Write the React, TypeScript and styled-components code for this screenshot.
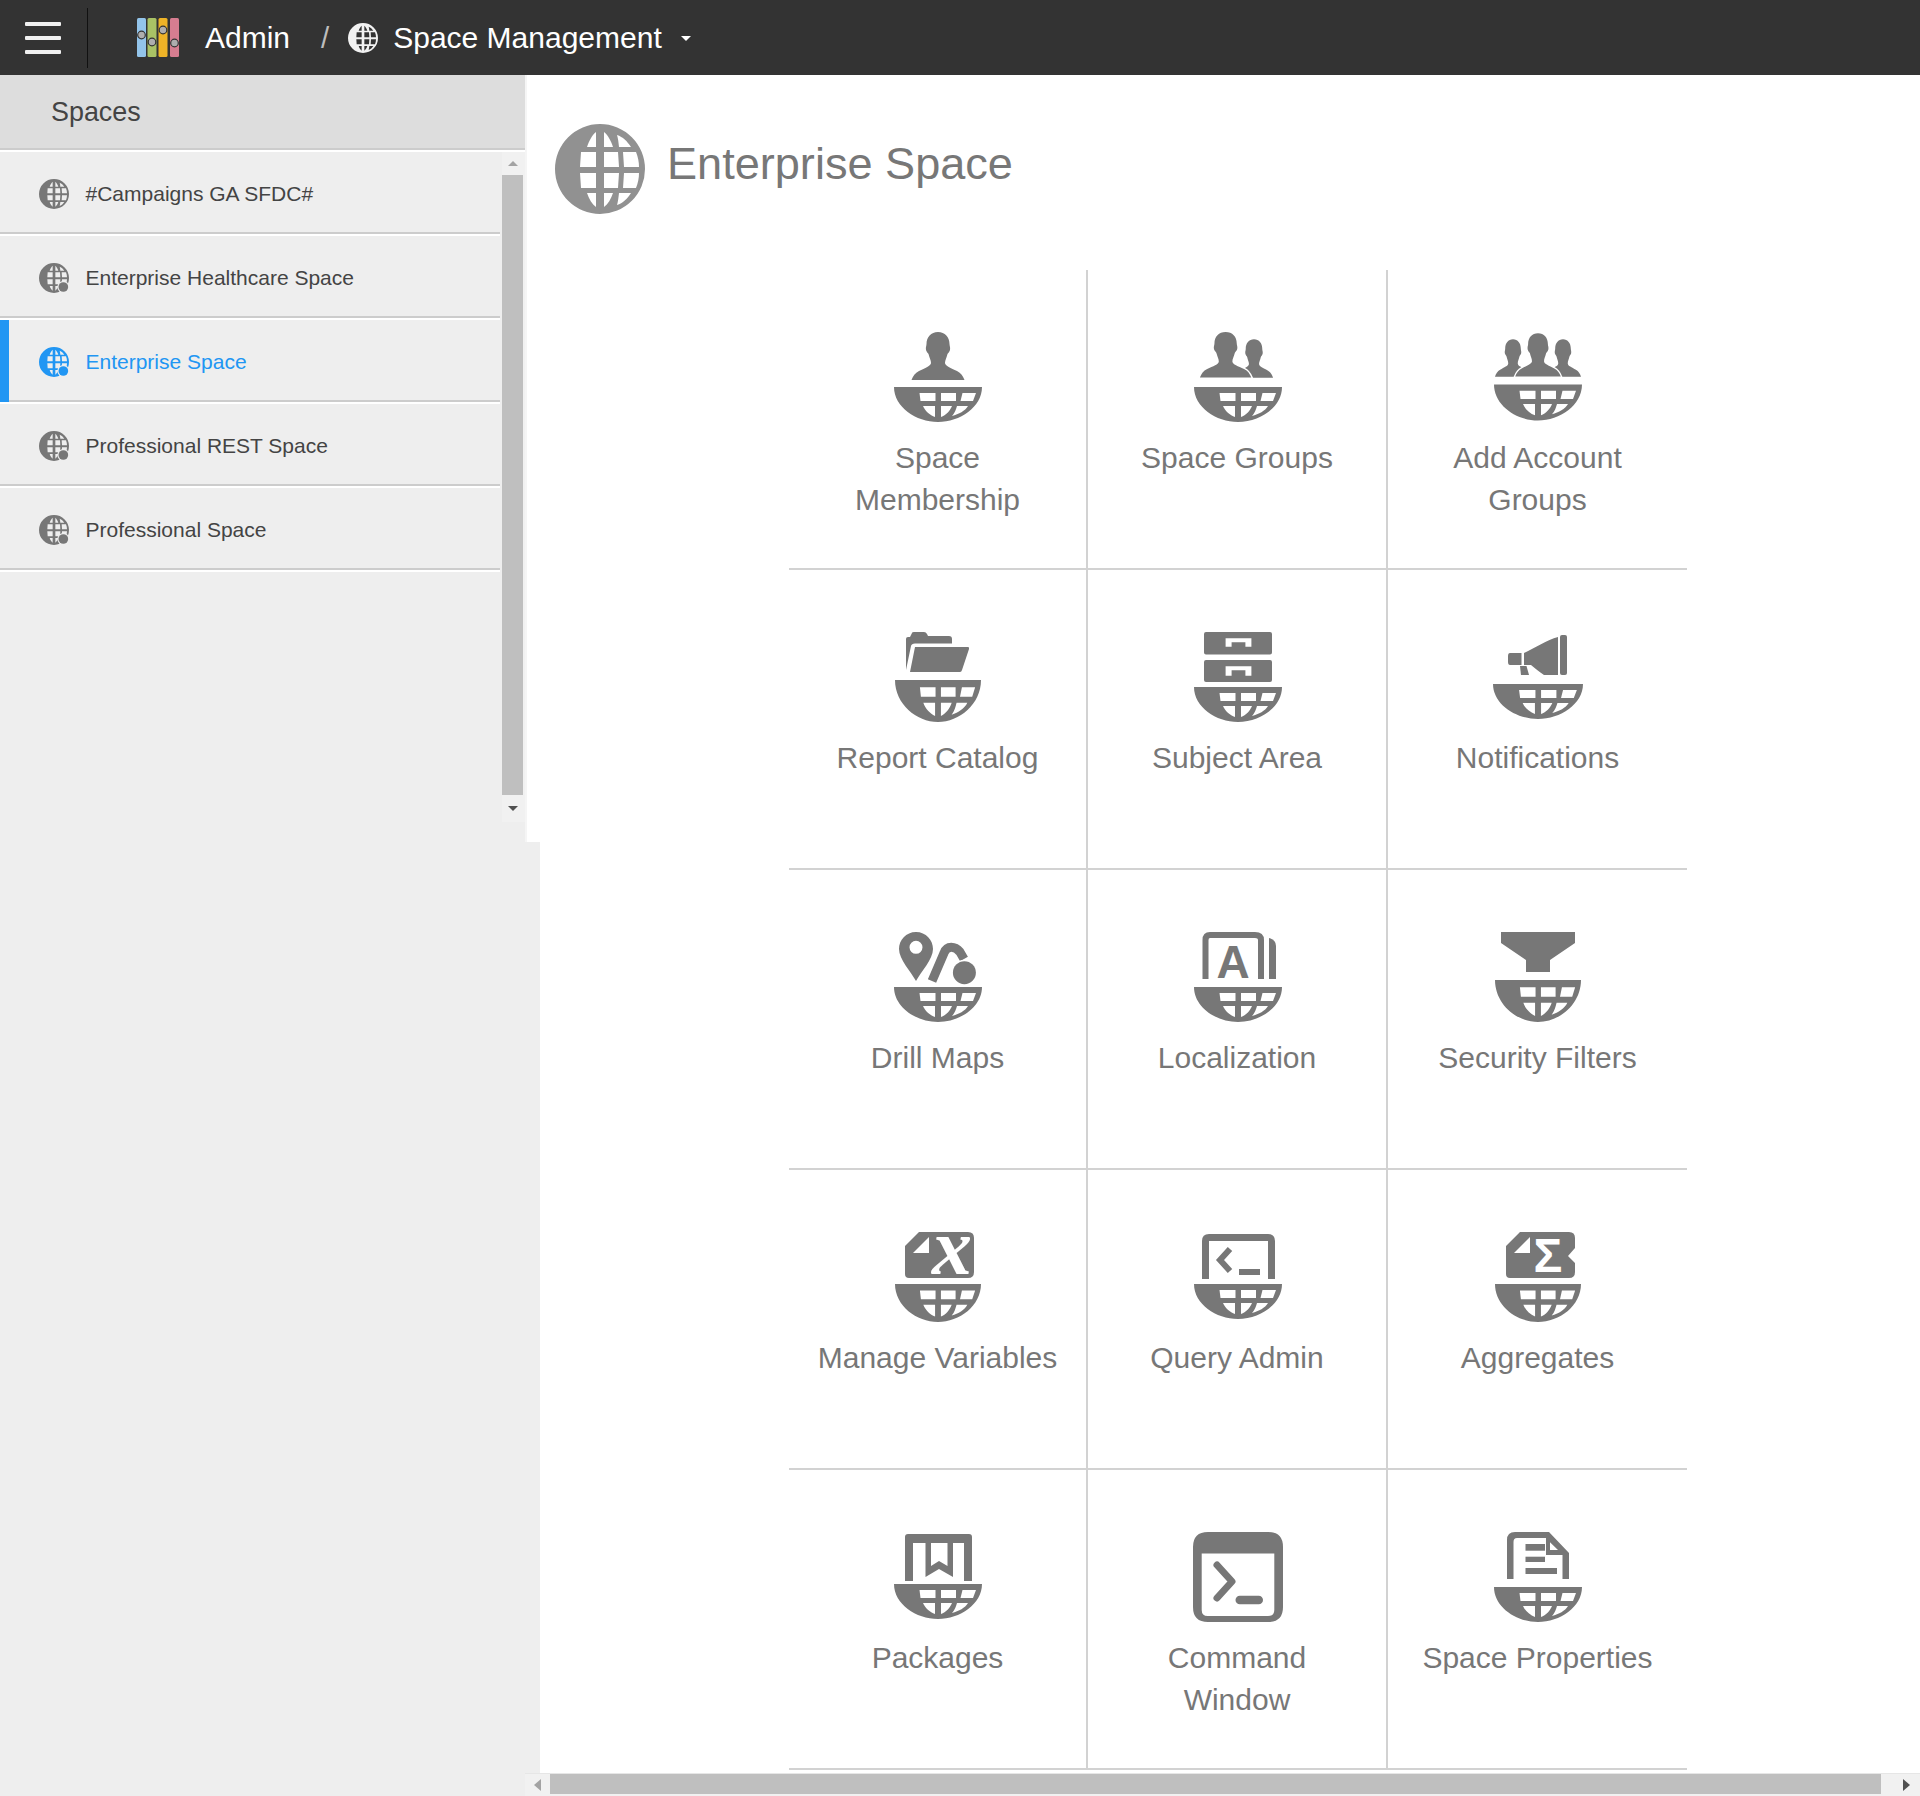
import React from "react";
import styled, { createGlobalStyle } from "styled-components";

const GlobalStyle = createGlobalStyle`
  html, body { margin: 0; padding: 0; background: #fff; }
  body { font-family: "Liberation Sans", Arial, sans-serif; }
`;

const Page = styled.div`
  position: relative;
  width: 1920px;
  height: 1796px;
  overflow: hidden;
  display: flex;
  flex-direction: column;
  background: #fff;
`;

const TopBar = styled.header`
  height: 75px;
  flex: none;
  background: #333;
  display: flex;
  align-items: center;
  color: #fff;
`;

const Burger = styled.div`
  margin-left: 25px;
  width: 36px;
  height: 32px;
  display: flex;
  flex-direction: column;
  justify-content: space-between;
`;

const BurgerBar = styled.span`
  display: block;
  height: 4px;
  border-radius: 1px;
  background: #f0f0f0;
`;

const BarDivider = styled.div`
  margin-left: 26px;
  width: 1px;
  height: 60px;
  background: #111;
`;

const LogoSvg = styled.svg`
  margin-left: 49px;
  width: 42px;
  height: 39px;
  flex: none;
`;

const Crumb = styled.span<{ $gap: number }>`
  margin-left: ${(p) => p.$gap}px;
  font-size: 30px;
  line-height: 34px;
  color: #fff;
`;

const CrumbSlash = styled.span`
  margin-left: 31px;
  font-size: 29.4px;
  line-height: 34px;
  color: #bdbdbd;
`;

const CrumbGlobe = styled.svg`
  margin-left: 19px;
  width: 30px;
  height: 30px;
  flex: none;
  color: #f2f2f2;
`;

const Caret = styled.span`
  margin-left: 19px;
  margin-top: 1px;
  width: 0;
  height: 0;
  border-left: 5.5px solid transparent;
  border-right: 5.5px solid transparent;
  border-top: 5px solid #fff;
`;

const Body = styled.div`
  flex: 1;
  display: flex;
  min-height: 0;
`;

const LeftColumn = styled.div`
  width: 540px;
  flex: none;
  background: #eee;
`;

const PanelBackdrop = styled.div`
  height: 767px;
  background: #fff;
`;

const Panel = styled.aside`
  width: 527px;
  height: 767px;
  box-sizing: border-box;
  background: #eee;
  border-right: 2px solid #f5f5f5;
  display: flex;
  flex-direction: column;
`;

const PanelHead = styled.div`
  flex: none;
  height: 71px;
  box-sizing: content-box;
  background: #ddd;
  border-bottom: 2px solid #ccc;
  margin-bottom: 2px;
  box-shadow: 0 2px 0 #fff;
  padding: 2px 0 0 51px;
  display: flex;
  align-items: center;
  font-size: 26.9px;
  color: #444;
`;

const ListArea = styled.div`
  height: 670px;
  flex: none;
  display: flex;
`;

const List = styled.ul`
  list-style: none;
  margin: 0;
  padding: 0;
  width: 500px;
  flex: none;
`;

const Item = styled.li<{ $active?: boolean }>`
  position: relative;
  height: 82px;
  box-sizing: border-box;
  margin-bottom: 2px;
  border-bottom: 2px solid #ccc;
  box-shadow: 0 2px 0 #fff;
  padding: 4px 0 0 39px;
  display: flex;
  align-items: center;
  gap: 16.5px;
  font-size: 21px;
  color: ${(p) => (p.$active ? "#2196f3" : "#444")};
  &::before {
    content: "";
    display: ${(p) => (p.$active ? "block" : "none")};
    position: absolute;
    left: 0;
    top: 0;
    bottom: -2px;
    width: 9px;
    background: #2196f3;
  }
`;

const ItemGlobe = styled.svg<{ $active?: boolean }>`
  width: 30px;
  height: 30px;
  flex: none;
  color: ${(p) => (p.$active ? "#2196f3" : "#777")};
`;

const VScroll = styled.div`
  margin-left: 2px;
  width: 23px;
  flex: none;
  background: #f1f1f1;
  display: flex;
  flex-direction: column;
`;

const VButton = styled.div<{ $height: number }>`
  height: ${(p) => p.$height}px;
  flex: none;
  display: flex;
  align-items: center;
  justify-content: center;
  padding-right: 2px;
`;

const VThumb = styled.div`
  flex: 1;
  width: 21px;
  background: #bfbfbf;
`;

const TriangleUp = styled.span`
  width: 0;
  height: 0;
  border-left: 5.5px solid transparent;
  border-right: 5.5px solid transparent;
  border-bottom: 5.5px solid #a3a3a3;
`;

const TriangleDown = styled.span`
  width: 0;
  height: 0;
  border-left: 5.5px solid transparent;
  border-right: 5.5px solid transparent;
  border-top: 5.5px solid #505050;
`;

const Main = styled.main`
  flex: 1;
  padding: 49px 0 0 15px;
  min-width: 0;
`;

const TitleRow = styled.div`
  display: flex;
  align-items: center;
  gap: 22px;
`;

const TitleGlobe = styled.svg`
  width: 90px;
  height: 90px;
  flex: none;
  color: #919191;
`;

const Title = styled.h1`
  margin: 0 0 11px;
  font-size: 45.1px;
  font-weight: 400;
  color: #777;
`;

const Grid = styled.div`
  margin: 56px 0 0 233px;
  display: grid;
  width: 900px;
  grid-template-columns: repeat(3, 300px);
  grid-auto-rows: 300px;
`;

const Cell = styled.div<{ $col: number; $first?: boolean }>`
  box-sizing: border-box;
  padding-top: ${(p) => (p.$first ? "61px" : "62px")};
  border-bottom: 2px solid #d2d2d2;
  border-right: ${(p) => (p.$col === 2 ? "0 none" : "2px solid #d2d2d2")};
  margin-left: ${(p) => (p.$col === 0 ? "1px" : "0")};
  width: ${(p) => (p.$col === 1 ? "300px" : "299px")};
  display: flex;
  flex-direction: column;
  align-items: center;
`;

const TileSvg = styled.svg<{ $shift: number }>`
  width: 90px;
  height: 90px;
  flex: none;
  margin-left: ${(p) => p.$shift}px;
  fill: #777;
  overflow: visible;
`;

const TileLabel = styled.div<{ $first?: boolean }>`
  margin-top: ${(p) => (p.$first ? "16px" : "15px")};
  width: 248px;
  text-align: center;
  font-size: 30px;
  line-height: 42px;
  color: #777;
`;

const HScroll = styled.div`
  position: absolute;
  left: 525px;
  right: 0;
  bottom: 0;
  height: 23px;
  box-sizing: border-box;
  background: #f1f1f1;
  border-top: 1px solid #e6e6e6;
  display: flex;
  align-items: stretch;
`;

const HButton = styled.div<{ $width: number; $end?: boolean }>`
  width: ${(p) => p.$width}px;
  box-sizing: border-box;
  padding-right: ${(p) => (p.$end ? "10px" : "0")};
  flex: none;
  display: flex;
  align-items: center;
  justify-content: ${(p) => (p.$end ? "flex-end" : "center")};
`;

const HThumb = styled.div`
  flex: 1;
  background: #bfbfbf;
  margin-bottom: 2px;
`;

const TriangleLeft = styled.span`
  width: 0;
  height: 0;
  border-top: 6px solid transparent;
  border-bottom: 6px solid transparent;
  border-right: 7px solid #a3a3a3;
`;

const TriangleRight = styled.span`
  width: 0;
  height: 0;
  border-top: 6px solid transparent;
  border-bottom: 6px solid transparent;
  border-left: 7px solid #505050;
`;

const GLOBE_D =
  "M-45 0A45 45 0 1 1 45 0A45 45 0 1 1 -45 0Z" +
  "M-4 -37C-8 -34 -11 -28 -13 -22H-4Z" +
  "M4 -37V-22H13C11 -28 8 -34 4 -37Z" +
  "M17 -34C23 -32 27 -28 31 -22H19C18.5 -27 18 -31 17 -34Z" +
  "M-19 -17H-4V-2H-20Z" +
  "M4 -17H18L19 -2H4Z" +
  "M23 -17H36C38 -12 39 -7 39 -2H24Z" +
  "M-20 4H-4V19H-19Z" +
  "M4 4H19L18 19H4Z" +
  "M24 4H39C39 9 38 14 36 19H23Z" +
  "M-13 24H-4V38C-8 35 -11 30 -13 24Z" +
  "M4 24H13C11 30 8 35 4 38Z" +
  "M19 24H31C27 30 23 34 17 36C18 33 18.5 28 19 24Z";

const GlobeShape = () => <path d={GLOBE_D} fill="currentColor" fillRule="evenodd" />;

const BASIN_D =
  "M-44 0H44C44 20 22 35 0 35C-22 35 -44 20 -44 0Z" +
  "M-18.5 6H-2.5V14H-17.5Z" +
  "M3 6H18V14H3Z" +
  "M24.5 6H38L35 14H22.5Z" +
  "M-15 19H-3V30C-8 28 -13 24 -15 19Z" +
  "M3 19H14C12 24 8 28 3 30Z" +
  "M19 19H30C27 24 21 27 14 29C17 26 18 22 19 19Z";

const Basin = ({ y, w = 88, h = 35 }: { y: number; w?: number; h?: number }) => (
  <path
    d={BASIN_D}
    fillRule="evenodd"
    transform={`translate(45 ${y}) scale(${w / 88} ${h / 35})`}
  />
);

const PERSON_D =
  "M0 0C7 0 11.5 5 11.5 12C11.5 14 12.5 15 12 18C11.5 20 10 21 9.5 22C8.5 26 7 28 7 31" +
  "C7 34 13 36 19 39C23 41 25 44 26.5 48H-26.5C-25 44 -23 41 -19 39C-13 36 -7 34 -7 31" +
  "C-7 28 -8.5 26 -9.5 22C-10 21 -11.5 20 -12 18C-12.5 15 -11.5 14 -11.5 12C-11.5 5 -7 0 0 0Z";

const Person = ({ x, y, sx, sy, halo }: { x: number; y: number; sx: number; sy: number; halo?: boolean }) => (
  <path
    d={PERSON_D}
    transform={`translate(${x} ${y}) scale(${sx} ${sy})`}
    stroke={halo ? "#fff" : "none"}
    strokeWidth={halo ? 3 : 0}
    paintOrder="stroke"
  />
);

const icons: Record<string, React.ReactNode> = {
  membership: (
    <>
      <Person x={45} y={1} sx={1} sy={1} />
      <Basin y={56} />
    </>
  ),
  groups: (
    <>
      <Person x={61} y={8.3} sx={0.72} sy={0.8} />
      <Person x={32.6} y={1} sx={0.97} sy={0.95} halo />
      <Basin y={56} />
    </>
  ),
  account: (
    <>
      <Person x={20} y={8.3} sx={0.68} sy={0.78} />
      <Person x={70} y={8.3} sx={0.68} sy={0.78} />
      <Person x={45} y={2.3} sx={0.86} sy={0.9} halo />
      <Basin y={53.5} h={36} />
    </>
  ),
  catalog: (
    <>
      <path d="M13 7Q13 5 15 5H17L19 1Q19 0 21 0H31Q33 0 34 2L35 4H56Q59 4 59 7V11.5H22Q18.5 11.5 18 14L13 38Z" />
      <path d="M22 15H75Q76.5 15 76 17L69 38Q68.5 40 67 40H17Z" />
      <Basin y={48} w={86} h={42} />
    </>
  ),
  subject: (
    <>
      <path
        fillRule="evenodd"
        d="M13 0H77Q79 0 79 2V20.5Q79 22.5 77 22.5H13Q11 22.5 11 20.5V2Q11 0 13 0Z
           M32.6 6.3V14.7H38.6V10.3H52.4V14.7H58.4V6.3Z
           M13 28H77Q79 28 79 30V48Q79 50 77 50H13Q11 50 11 48V30Q11 28 13 28Z
           M32.6 34.3V43.7H38.6V38.3H52.4V43.7H58.4V34.3Z"
      />
      <Basin y={55} />
    </>
  ),
  notify: (
    <>
      <path d="M17 21H28.5V33H17Q15 33 15 30V24Q15 21 17 21Z" />
      <path d="M31 21C42 16 54 8 65 5V43H51C46 40 42 36 38 33H31Z" />
      <path d="M27 34H33.5L36 43H28Z" />
      <rect x={67} y={3} width={7} height={40} rx={2} />
      <Basin y={52} w={90} />
    </>
  ),
  drill: (
    <>
      <path
        fillRule="evenodd"
        d="M23 0C13 0 6 8 6 17C6 27 18 40 23 49C28 40 40 27 40 17C40 8 33 0 23 0Z
           M23 8.8A6.5 6.5 0 1 1 23 21.8A6.5 6.5 0 1 1 23 8.8Z"
      />
      <path d="M39 49L51 21C54 13 62 14 67 20L71 27" fill="none" stroke="#777" strokeWidth={9} />
      <circle cx={71.4} cy={40.7} r={11.5} fill="#777" stroke="#fff" strokeWidth={3} paintOrder="stroke" />
      <Basin y={55} />
    </>
  ),
  locale: (
    <>
      <path d="M12.5 47V8Q12.5 3 17 3H62Q68 3 68 8V47" fill="none" stroke="#777" strokeWidth={6} />
      <path d="M76 6Q83 8 83 14V47H76Z" />
      <text x={40} y={46} textAnchor="middle" fontFamily="'Liberation Sans', Arial, sans-serif" fontWeight={700} fontSize={46} fill="#777">
        A
      </text>
      <Basin y={55} />
    </>
  ),
  security: (
    <>
      <path d="M8 0H82V11L57 28V40H33V28L8 11Z" />
      <Basin y={48} w={86} h={42} />
    </>
  ),
  variables: (
    <>
      <path d="M26 0H75Q81 0 81 6V40Q81 46 75 46H16Q12 46 12 42V14Z" />
      <path d="M36 5V21H20Z" fill="#fff" />
      <text
        x={59}
        y={42}
        textAnchor="middle"
        fontFamily="'Liberation Serif', 'Times New Roman', serif"
        fontStyle="italic"
        fontWeight={700}
        fontSize={80}
        fill="#fff"
      >
        x
      </text>
      <Basin y={52} w={86} h={38} />
    </>
  ),
  query: (
    <>
      <path d="M12.5 47V9Q12.5 5.5 16 5.5H75Q78.5 5.5 78.5 9V47" fill="none" stroke="#777" strokeWidth={7} />
      <path d="M37 17L27 28L37 39" fill="none" stroke="#777" strokeWidth={6} />
      <rect x={46} y={37} width={21} height={6} />
      <Basin y={52} />
    </>
  ),
  aggregates: (
    <>
      <path d="M27 0H76Q82 0 82 6V16L75 24L82 31V40Q82 46 76 46H17Q13 46 13 42V14Z" />
      <path d="M37 5V21H21Z" fill="#fff" />
      <text x={55} y={39.5} textAnchor="middle" fontFamily="'Liberation Sans', Arial, sans-serif" fontWeight={700} fontSize={48} fill="#fff">
        Σ
      </text>
      <Basin y={52} w={86} h={38} />
    </>
  ),
  packages: (
    <>
      <path d="M12 49V5Q12 2 15 2H76Q79 2 79 5V49H71V11H20V49Z" />
      <path fillRule="evenodd" d="M32.5 10H60V45L46 37L32.5 45ZM38 11V34L46 29L54.5 34V11Z" />
      <Basin y={52} />
    </>
  ),
  command: (
    <>
      <path
        fillRule="evenodd"
        d="M15 0H75Q90 0 90 15V75Q90 90 75 90H15Q0 90 0 75V15Q0 0 15 0Z
           M8.7 21.5V78Q8.7 84 14.7 84H75Q81.3 84 81.3 78V21.5Z"
      />
      <path d="M24 33L39 49.5L24 66" fill="none" stroke="#777" strokeWidth={7} strokeLinecap="round" strokeLinejoin="round" />
      <rect x={42.5} y={63.7} width={27.5} height={8.6} rx={4.3} />
    </>
  ),
  properties: (
    <>
      <path
        fillRule="evenodd"
        d="M14 47V8Q14 0 22 0H56L76 21V47H69.5V23H53V6H24Q20.5 6 20.5 10V47Z
           M57 10.3L65 18H57Z"
      />
      <rect x={32.5} y={12} width={19.5} height={6.7} />
      <rect x={32.5} y={24.7} width={19.5} height={5.3} />
      <rect x={32.5} y={36} width={31.5} height={6} />
      <Basin y={55} />
    </>
  ),
};

const spaces = [
  { name: "#Campaigns GA SFDC#", dot: false },
  { name: "Enterprise Healthcare Space", dot: true },
  { name: "Enterprise Space", dot: true, active: true },
  { name: "Professional REST Space", dot: true },
  { name: "Professional Space", dot: true },
];

const tiles: { label: string; icon: string }[] = [
  { label: "Space Membership", icon: "membership" },
  { label: "Space Groups", icon: "groups" },
  { label: "Add Account Groups", icon: "account" },
  { label: "Report Catalog", icon: "catalog" },
  { label: "Subject Area", icon: "subject" },
  { label: "Notifications", icon: "notify" },
  { label: "Drill Maps", icon: "drill" },
  { label: "Localization", icon: "locale" },
  { label: "Security Filters", icon: "security" },
  { label: "Manage Variables", icon: "variables" },
  { label: "Query Admin", icon: "query" },
  { label: "Aggregates", icon: "aggregates" },
  { label: "Packages", icon: "packages" },
  { label: "Command Window", icon: "command" },
  { label: "Space Properties", icon: "properties" },
];

const logoBars = [
  { x: 0, color: "#93c4ea", cy: 17 },
  { x: 10.5, color: "#a9c265", cy: 24 },
  { x: 21.5, color: "#eeb327", cy: 12 },
  { x: 33, color: "#d67d90", cy: 25 },
];

const Logo = () => (
  <LogoSvg viewBox="0 0 42 39">
    {logoBars.map((b) => (
      <g key={b.x}>
        <rect x={b.x} y={0} width={9} height={39} rx={1.5} fill={b.color} />
        <circle cx={b.x + 4.5} cy={b.cy} r={3.8} fill="#aeaeae" stroke="#333" strokeWidth={1.2} />
      </g>
    ))}
  </LogoSvg>
);

export default function App() {
  return (
    <>
      <GlobalStyle />
      <Page>
        <TopBar>
          <Burger>
            <BurgerBar />
            <BurgerBar />
            <BurgerBar />
          </Burger>
          <BarDivider />
          <Logo />
          <Crumb $gap={26}>Admin</Crumb>
          <CrumbSlash>/</CrumbSlash>
          <CrumbGlobe viewBox="-45 -45 90 90">
            <GlobeShape />
          </CrumbGlobe>
          <Crumb $gap={15}>Space Management</Crumb>
          <Caret />
        </TopBar>
        <Body>
          <LeftColumn>
            <PanelBackdrop>
              <Panel>
                <PanelHead>Spaces</PanelHead>
                <ListArea>
                  <List>
                    {spaces.map((s) => (
                      <Item key={s.name} $active={s.active}>
                        <ItemGlobe viewBox="-45 -45 90 90" $active={s.active}>
                          <GlobeShape />
                          {s.dot && (
                            <>
                              <circle cx={28} cy={27} r={18} fill="#eee" />
                              <circle cx={28} cy={27} r={14.5} fill="currentColor" />
                            </>
                          )}
                        </ItemGlobe>
                        {s.name}
                      </Item>
                    ))}
                  </List>
                  <VScroll>
                    <VButton $height={23}>
                      <TriangleUp />
                    </VButton>
                    <VThumb />
                    <VButton $height={27}>
                      <TriangleDown />
                    </VButton>
                  </VScroll>
                </ListArea>
              </Panel>
            </PanelBackdrop>
          </LeftColumn>
          <Main>
            <TitleRow>
              <TitleGlobe viewBox="-45 -45 90 90">
                <GlobeShape />
              </TitleGlobe>
              <Title>Enterprise Space</Title>
            </TitleRow>
            <Grid>
              {tiles.map((t, i) => (
                <Cell key={t.label} $col={i % 3} $first={i < 3}>
                  <TileSvg viewBox="0 0 90 90" $shift={i % 3 === 2 ? 0 : i % 3 === 0 ? 1 : 2}>
                    {icons[t.icon]}
                  </TileSvg>
                  <TileLabel $first={i < 3}>{t.label}</TileLabel>
                </Cell>
              ))}
            </Grid>
          </Main>
        </Body>
        <HScroll>
          <HButton $width={25}>
            <TriangleLeft />
          </HButton>
          <HThumb />
          <HButton $width={39} $end>
            <TriangleRight />
          </HButton>
        </HScroll>
      </Page>
    </>
  );
}
